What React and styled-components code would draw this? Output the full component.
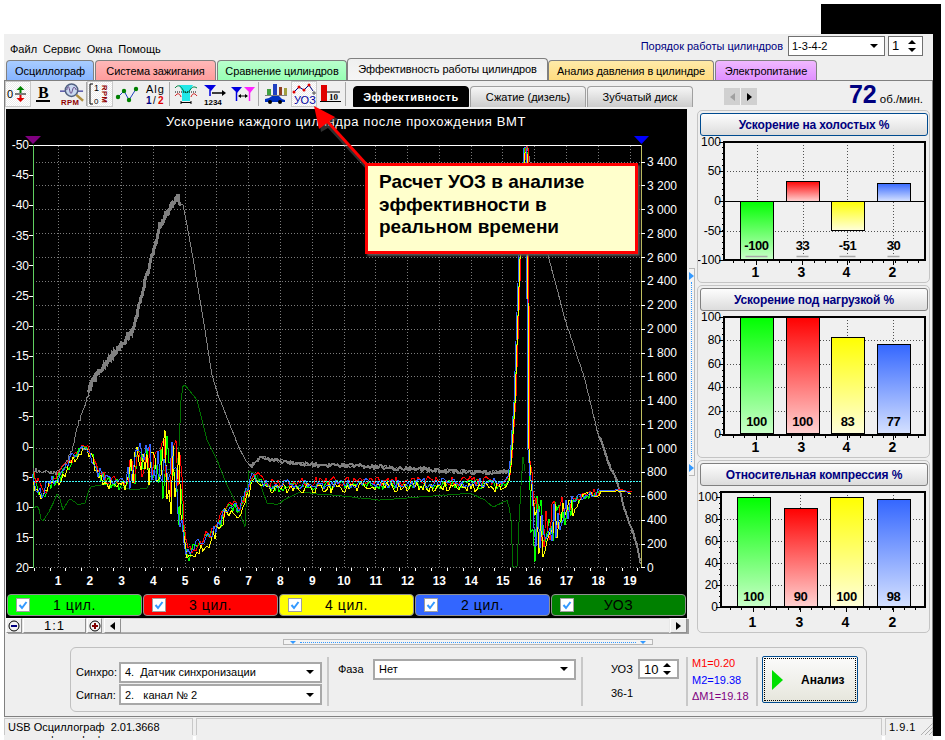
import React from 'react'
import styled, { createGlobalStyle } from 'styled-components'

const Global = createGlobalStyle`
  html, body { margin: 0; padding: 0; background: #ffffff; }
  body { font-family: "Liberation Sans", Arial, sans-serif; font-size: 11px; color: #000; }
  * { box-sizing: border-box; }
`

// trace helpers
const rng = (seed) => {
  let s = seed
  return () => {
    s = (s * 16807) % 2147483647
    return s / 2147483647
  }
}

const lerp = (keys, x) => {
  for (let i = 1; i < keys.length; i++) {
    if (x <= keys[i][0]) {
      const [x0, y0] = keys[i - 1]
      const [x1, y1] = keys[i]
      return y0 + ((y1 - y0) * (x - x0)) / Math.max(x1 - x0, 0.01)
    }
  }
  return keys[keys.length - 1][1]
}

const between = (keys, a, b) => [
  [a, lerp(keys, a)],
  ...keys.filter(([x]) => x > a && x < b),
  [b, lerp(keys, b)],
]

const makeTrace = (keys, ampAt, seed, step = 2, dy = 0) => {
  const r = rng(seed)
  const pts = []
  const end = keys[keys.length - 1][0]
  for (let x = keys[0][0]; x <= end; x += step) {
    const shift = x > 580 ? dy * 0.2 : dy
    const y = lerp(keys, x) + shift + (r() - 0.5) * 2 * ampAt(x)
    pts.push(`${x},${Math.min(568, Math.max(146, y)).toFixed(1)}`)
  }
  return pts.join(' ')
}

const cylKeys = [
  [33, 480], [43, 494], [50, 482], [58, 477], [70, 462], [78, 450], [85, 447], [92, 455], [98, 470], [105, 480],
  [115, 482], [125, 484], [130, 470], [140, 460], [150, 462], [165, 468], [178, 478], [183, 520], [187, 556],
  [195, 546], [205, 540], [215, 532], [225, 510], [240, 506], [248, 490], [252, 472], [260, 480], [270, 486],
  [300, 484], [400, 483], [505, 483], [510, 476], [515, 400], [520, 255], [524, 148], [527, 148], [528, 400],
  [530, 500], [535, 528], [550, 522], [565, 512], [580, 497], [600, 491], [620, 490], [632, 493],
]

const cylAmp = (x) => {
  if (x < 130) return 6
  if (x < 160) return 20
  if (x < 183) return 42
  if (x < 250) return 7
  if (x < 505) return 5
  if (x < 529) return 2
  if (x < 575) return 38 - (x - 529) * 0.65
  if (x < 600) return 4
  return 0.6
}

const greyKeys = [
  [33, 470], [50, 472], [58, 473], [65, 465], [72, 450], [78, 425], [85, 405], [92, 382], [100, 372], [110, 358],
  [120, 347], [130, 336], [135, 325], [140, 300], [150, 265], [160, 225], [170, 208], [176, 200], [178, 195],
  [180, 205], [183, 205], [187, 225], [195, 270], [205, 330], [212, 375], [218, 395], [230, 425], [240, 450],
  [247, 462], [250, 466], [258, 460], [265, 458], [280, 461], [300, 464], [400, 468], [470, 472], [510, 472],
  [515, 400], [520, 270], [525, 148], [527, 146], [548, 255], [560, 300], [565, 320], [572, 340], [585, 380],
  [597, 430], [603, 448], [612, 470], [617, 480], [622, 500], [630, 525], [637, 545], [641, 566],
]

const greyAmp = (x) => {
  if (x < 88) return 2
  if (x < 180) return 3.5
  if (x < 250) return 0.5
  if (x < 510) return 2.2
  if (x < 600) return 0.6
  return 2.5
}

const uozKeys = [
  [33, 509], [38, 505], [42, 523], [50, 510], [58, 492], [63, 510], [70, 498], [78, 505], [85, 503], [90, 487],
  [100, 485], [105, 484], [133, 490], [147, 488], [157, 470], [167, 470], [178, 470], [181, 400], [182, 388],
  [184, 384], [197, 400], [207, 440], [217, 460], [227, 485], [237, 505], [245, 527], [248, 470], [257, 475],
  [267, 503], [277, 505], [287, 498], [300, 492], [380, 500], [470, 493], [485, 500], [493, 507], [508, 500],
  [511, 520], [513, 567], [517, 567], [520, 500], [524, 442], [526, 500],
]

const leftLabels = [-50, -45, -40, -35, -30, -25, -20, -15, -10, -5, 0, 5, 10, 15, 20]
const rightLabels = ['3 400', '3 200', '3 000', '2 800', '2 600', '2 400', '2 200', '2 000', '1 800', '1 600', '1 400', '1 200', '1 000', '800', '600', '400', '200', '0']
const hours = Array.from({ length: 19 }, (_, i) => i + 1)
const xAt = (n) => 58 + 31.78 * (n - 1)

const Page = styled.div`
  position: relative;
  width: 945px;
  height: 740px;
  overflow: hidden;
  background: #ffffff;
`

const TopStrip = styled.div`
  height: 34px;
  padding: 4px 4px 0 0;
  display: flex;
  justify-content: flex-end;
`

const BlackBlock = styled.div`
  width: 120px;
  background: #000;
`

const WindowRow = styled.div`
  display: flex;
  padding-left: 4px;
`

const BlackEdge = styled.div`
  width: 8px;
  background: #000;
`

const Window = styled.div`
  width: 929px;
  height: 702px;
  background: #efefef;
  display: flex;
  flex-direction: column;
`

const MenuRow = styled.div`
  height: 26px;
  display: flex;
  justify-content: space-between;
  align-items: flex-start;
  padding: 2px 10px 0 6px;
`

const MenuList = styled.div`
  display: flex;
  gap: 6px;
  margin-top: 7px;
  line-height: 13px;
`

const OrderBox = styled.div`
  display: flex;
  align-items: center;
  height: 19px;
`

const OrderLabel = styled.span`
  color: #000080;
  margin-right: 5px;
`

const Field = styled.div`
  display: flex;
  align-items: center;
  justify-content: space-between;
  width: ${(p) => p.$w}px;
  height: ${(p) => p.$h || 20}px;
  margin-left: ${(p) => p.$ml || 0}px;
  background: #fff;
  border: ${(p) => (p.$dark ? '1px solid #707070' : '2px solid #a8a8a8')};
  padding: 0 6px 0 ${(p) => (p.$dark ? 3 : 4)}px;
  font-size: ${(p) => p.$fs || 11}px;
  white-space: pre;
`

const DownMark = styled.i`
  display: block;
  width: 0;
  height: 0;
  border-left: 4px solid transparent;
  border-right: 4px solid transparent;
  border-top: 4px solid #000;
`

const UpMark = styled(DownMark)`
  border-top: 0;
  border-bottom: 4px solid #000;
`

const SpinMarks = styled.span`
  display: flex;
  flex-direction: column;
  gap: 4px;
`

const TabRow = styled.div`
  height: 20px;
  display: flex;
  align-items: flex-end;
  padding-left: 2px;
`

const Tab = styled.div`
  width: ${(p) => p.$w}px;
  height: ${(p) => (p.$active ? 22 : 20)}px;
  margin-right: ${(p) => p.$gap || 0}px;
  background: linear-gradient(${(p) => p.$from}, ${(p) => p.$to});
  border: 1px solid #808080;
  border-bottom: 0;
  border-radius: 4px 4px 0 0;
  display: flex;
  align-items: center;
  justify-content: center;
  letter-spacing: -0.1px;
  white-space: nowrap;
  padding-bottom: ${(p) => (p.$active ? 2 : 0)}px;
`

const Body = styled.div`
  flex: none;
  height: 637px;
  border: 1px solid #808080;
  display: flex;
  flex-direction: column;
`

const ToolRow = styled.div`
  height: 26px;
  display: flex;
  align-items: flex-end;
`

const Tools = styled.div`
  display: flex;
  height: 26px;
  width: 348px;
  align-items: center;
`

const ToolBtn = styled.div`
  width: ${(p) => p.$w}px;
  height: 26px;
  margin-left: ${(p) => p.$ml || 0}px;
  display: flex;
  align-items: center;
  justify-content: center;
  background: ${(p) => (p.$on ? 'repeating-conic-gradient(#ffffff 0 25%, #ececec 0 50%) 0 0 / 2px 2px' : 'transparent')};
  border: 1px solid ${(p) => (p.$on ? '#c8c8c8' : 'transparent')};
`

const ToolSep = styled.div`
  width: 1px;
  height: 24px;
  margin-left: ${(p) => p.$ml || 0}px;
  background: #a8a8a8;
`

const SubTabs = styled.div`
  display: flex;
  gap: 1px;
  height: 21px;
`

const SubTab = styled.div`
  width: ${(p) => p.$w}px;
  border-radius: 4px 4px 0 0;
  display: flex;
  align-items: center;
  justify-content: center;
  white-space: nowrap;
  ${(p) =>
    p.$active
      ? 'background: #000; color: #fff; font-weight: bold; letter-spacing: 0.5px; border: 1px solid #000;'
      : 'background: linear-gradient(#f6f6f6, #cccccc); border: 1px solid #a0a0a0; border-bottom: 0;'}
`

const ArrowPair = styled.div`
  display: flex;
  width: 33px;
  height: 17px;
  margin: 0 0 2px 31px;
  background: #d0d0d0;
`

const ArrowBtn = styled.div`
  flex: 1;
  display: flex;
  align-items: center;
  justify-content: center;
  border-left: ${(p) => (p.$divided ? '1px solid #f4f4f4' : '0')};
`

const SideMark = styled.i`
  display: block;
  width: 0;
  height: 0;
  border-top: 4px solid transparent;
  border-bottom: 4px solid transparent;
  ${(p) => (p.$left ? `border-right: 5px solid ${p.$color};` : `border-left: 5px solid ${p.$color};`)}
`

const Rpm = styled.div`
  margin-left: auto;
  padding-right: 9px;
  display: flex;
  align-items: baseline;
  gap: 3px;
  height: 26px;
  line-height: 26px;
  font-size: 11.5px;
`

const RpmValue = styled.b`
  color: #000080;
  font-size: 25px;
`

const MainRow = styled.div`
  display: flex;
  padding: 2px 0 0 1px;
`

const ScopeColumn = styled.div`
  width: 681px;
`

const ScopeBlack = styled.div`
  background: #000;
  height: 509px;
`

const ScopeSvg = styled.svg`
  display: block;
  width: 681px;
  height: 485px;
`

const Legend = styled.div`
  display: flex;
  gap: 1px;
  padding-left: 1px;
`

const LegendBtn = styled.div`
  position: relative;
  width: 135px;
  height: 22px;
  background: ${(p) => p.$color};
  border: 1px solid #909090;
  border-radius: 4px;
  display: flex;
  align-items: center;
  justify-content: center;
  font-size: 14px;
  letter-spacing: 0.6px;
`

const Check = styled.svg`
  position: absolute;
  left: 8px;
  top: 3px;
`

const ScrollRow = styled.div`
  display: flex;
  height: 15px;
  background: #e8e8e8;
  box-shadow: 2px 1px 0 #a0a0a0;
`

const ScrollBtn = styled.div`
  width: ${(p) => p.$w}px;
  margin-left: ${(p) => p.$ml || 0}px;
  height: 15px;
  background: #efefef;
  border: 1px solid;
  border-color: #ffffff #909090 #909090 #ffffff;
  display: flex;
  align-items: center;
  justify-content: center;
  font-size: 13px;
  letter-spacing: 1px;
`

const ScrollTrack = styled.div`
  flex: 1;
  background: #efefef;
  border-top: 1px solid #d0d0d0;
  border-bottom: 1px solid #b0b0b0;
`

const VSplitWrap = styled.div`
  width: 10px;
  padding: 159px 0 0 2px;
`

const VSplit = styled.div`
  width: 6px;
  height: 208px;
  border: 1px solid #b8b8b8;
  border-left: 0;
  background: #f4f4f4;
  display: flex;
  flex-direction: column;
  align-items: center;
  justify-content: space-between;
  padding: 3px 0;
`

const VDots = styled.div`
  flex: 1;
  width: 0;
  margin: 2px 0;
  border-left: 1px dotted #3399ff;
`

const SidePanels = styled.div`
  width: 234px;
  margin-top: 1px;
  display: flex;
  flex-direction: column;
  gap: 2px;
`

const Panel = styled.div`
  height: 173px;
  width: 233px;
  border: 1px solid #c4c4c4;
  border-radius: 5px;
  padding: 2px 1px 0 2px;
`

const PanelHead = styled.div`
  height: 23px;
  width: 228px;
  background: linear-gradient(#fdfdfd, #dcdcdc);
  border: 1px solid ${(p) => p.$edge};
  border-radius: 3px;
  display: flex;
  align-items: center;
  justify-content: center;
  color: #000080;
  font-weight: bold;
  font-size: 12px;
  letter-spacing: -0.15px;
`

const BarSvg = styled.svg`
  display: block;
  width: 231px;
  height: 146px;
  margin-left: -2px;
`

const HSplitWrap = styled.div`
  height: 14px;
  padding: 6px 0 0 278px;
`

const HSplit = styled.div`
  width: 370px;
  height: 6px;
  background: #f4f4f4;
  border: 1px solid #b8b8b8;
  display: flex;
  align-items: center;
  padding: 0 6px;
  gap: 4px;
`

const HDots = styled.div`
  flex: 1;
  height: 0;
  border-top: 1px dotted #3399ff;
`

const TinyDown = styled.i`
  display: block;
  width: 0;
  height: 0;
  border-left: 3px solid transparent;
  border-right: 3px solid transparent;
  border-top: 3px solid #3399ff;
`

const ControlWrap = styled.div`
  padding-left: 65px;
`

const ControlPanel = styled.div`
  width: 797px;
  height: 65px;
  border: 1px solid #c0c0c0;
  border-radius: 6px;
  display: flex;
`

const Section = styled.div`
  width: ${(p) => p.$w}px;
  margin-top: 9px;
  height: 49px;
  border-right: ${(p) => (p.$last ? '0' : '2px solid #c8c8c8')};
  display: flex;
  flex-direction: ${(p) => (p.$row ? 'row' : 'column')};
  padding-left: ${(p) => p.$pl || 0}px;
`

const LabeledRow = styled.div`
  display: flex;
  align-items: center;
  height: 24px;
  margin-top: ${(p) => p.$mt || 0}px;
`

const RowLabel = styled.span`
  width: ${(p) => p.$w}px;
  flex: none;
`

const Readouts = styled.div`
  display: flex;
  flex-direction: column;
  margin-top: -2px;
  padding-left: 4px;
  line-height: 16.5px;
`

const Readout = styled.span`
  color: ${(p) => p.$color};
`

const AnalyzeWrap = styled.div`
  padding: 8px 0 0 4px;
`

const AnalyzeBtn = styled.div`
  width: 96px;
  height: 47px;
  border: 1px solid #004b8f;
  border-radius: 2px;
  background: linear-gradient(#fbfbfb, #e6e6dc);
  outline: 1px dotted #000;
  outline-offset: -3px;
  display: flex;
  align-items: center;
  padding-left: 9px;
  font-weight: bold;
  font-size: 12px;
  gap: 18px;
`

const StatusBar = styled.div`
  display: flex;
  height: 18px;
  padding-top: 1px;
  flex: none;
`

const StatusCell = styled.div`
  width: ${(p) => p.$w}px;
  margin-left: ${(p) => p.$ml || 0}px;
  border: 1px solid #c8c8c8;
  border-bottom: 0;
  padding: 0 3px;
  line-height: 16px;
  letter-spacing: ${(p) => p.$ls || 0}px;
  white-space: pre;
  overflow: hidden;
`

const Grip = styled.svg`
  position: absolute;
  left: 921px;
  top: 723px;
`

const Ghost = styled.div`
  position: absolute;
  left: 4px;
  top: 736px;
  width: 929px;
  height: 4px;
  overflow: hidden;
  display: flex;
`

const GhostCell = styled.div`
  width: ${(p) => p.$w}px;
  margin-left: ${(p) => p.$ml || 0}px;
  background: #efefef;
  white-space: pre;
  padding-left: 3px;
  line-height: 16px;
  margin-top: -12px;
  height: 16px;
`

const Callout = styled.div`
  position: absolute;
  left: 365px;
  top: 163px;
  width: 273px;
  height: 91px;
  background: #ffffcc;
  border: 3px solid #ff0000;
  box-shadow: 2px 2px 2px #555;
  padding: 5px 0 0 11px;
  font-size: 19px;
  line-height: 22.5px;
  font-weight: bold;
`

const ArrowLayer = styled.svg`
  position: absolute;
  left: 300px;
  top: 100px;
`

const Icon = ({ children, w = 24 }) => (
  <svg width={w} height={24} viewBox={`0 0 ${w} 24`}>
    {children}
  </svg>
)

const iconText = { fontFamily: '"Liberation Sans", Arial, sans-serif' }

const ZeroIcon = () => (
  <Icon>
    <text x="1" y="16" fontSize="11" style={iconText}>0</text>
    <path d="M9 12h11" stroke="#000" />
    <path d="M14.500 4l4 4h-3v3h-2v-3h-3z" fill="#008000" />
    <path d="M14.500 20l4-4h-3v-3h-2v3h-3z" fill="#e00000" />
  </Icon>
)

const BoldIcon = () => (
  <Icon>
    <text x="5" y="16" fontSize="16" fontWeight="bold" style={{ fontFamily: '"Liberation Serif", serif' }}>B</text>
    <path d="M3 19h14" stroke="#000" strokeWidth="2" />
  </Icon>
)

const RpmIcon = () => (
  <Icon w={26}>
    <path d="M0 9h24" stroke="#000080" />
    <circle cx="12" cy="8" r="6.500" fill="#c8d8f0" stroke="#506080" strokeWidth="1.500" />
    <path d="M7 8c1-5 2-5 3 0s2 4 3 0 2-4 4 0" fill="none" stroke="#604080" />
    <path d="M17 13l7 6" stroke="#b09040" strokeWidth="2.500" />
    <text x="1" y="23" fontSize="8" fontWeight="bold" fill="#900000" style={iconText} letterSpacing="0.5">RPM</text>
  </Icon>
)

const ScaleIcon = () => (
  <Icon>
    <path d="M5 2H2v20h3" fill="none" stroke="#000" />
    <text x="6" y="9" fontSize="9" style={iconText}>1</text>
    <text x="6" y="22" fontSize="8" style={iconText}>0</text>
    <text x="0" y="0" fontSize="7.500" fontWeight="bold" fill="#900000" style={iconText} transform="translate(14 3) rotate(90)" letterSpacing="0.5">RPM</text>
  </Icon>
)

const ZigIcon = () => (
  <Icon>
    <polyline points="3,15 9,9 14,18 21,7" fill="none" stroke="#2040c0" />
    <g fill="#008000">
      <circle cx="3" cy="15" r="2.200" />
      <circle cx="9" cy="9" r="2.200" />
      <circle cx="14" cy="18" r="2.200" />
      <circle cx="21" cy="7" r="2.200" />
    </g>
  </Icon>
)

const AlgIcon = () => (
  <Icon>
    <text x="3" y="11" fontSize="11" letterSpacing="1" style={iconText}>Alg</text>
    <text x="3" y="22" fontSize="10" fontWeight="bold" fill="#000080" style={iconText}>1</text>
    <text x="10" y="22" fontSize="10" style={iconText}>/</text>
    <text x="15" y="22" fontSize="10" fontWeight="bold" fill="#e00000" style={iconText}>2</text>
  </Icon>
)

const FaceIcon = () => (
  <Icon>
    <path d="M5 3h14l-3 6v10h-8v-10z" fill="#20e8e8" />
    <path d="M1 6c3-4 6-2 8 2s5 3 7 0 4-4 7-2" fill="none" stroke="#008040" />
    <path d="M1 14c3-4 5-2 6 1M17 15c1-3 3-5 6-1" fill="none" stroke="#d02020" />
    <path d="M1 10h22" stroke="#000" strokeDasharray="1 1" />
    <path d="M7 19v3M17 19v3M7 20.500h10" stroke="#000" />
  </Icon>
)

const FunnelArrowIcon = () => (
  <Icon>
    <path d="M1 3h12l-5 6z" fill="#0000e0" />
    <path d="M7 8v6" stroke="#0000e0" strokeWidth="1.500" />
    <path d="M9 11h11" stroke="#000" strokeWidth="1.500" />
    <path d="M19 8l4 3-4 3z" fill="#000" />
    <text x="1" y="23" fontSize="8" fontWeight="bold" style={iconText}>1234</text>
  </Icon>
)

const FunnelsIcon = () => (
  <Icon>
    <path d="M0 5h11l-5 6z" fill="#0000e0" />
    <path d="M5.500 10v9" stroke="#0000e0" strokeWidth="1.500" />
    <path d="M13 5h11l-5 6z" fill="#ff20ff" />
    <path d="M18.500 10v9" stroke="#ff20ff" strokeWidth="1.500" />
    <path d="M8 14h8" stroke="#000" />
    <path d="M10 12l-3 2 3 2zM14 12l3 2-3 2z" fill="#000" />
  </Icon>
)

const CarIcon = () => (
  <Icon>
    <rect x="3" y="7" width="4" height="6" fill="#40a040" />
    <rect x="9" y="2" width="4" height="11" fill="#2040c0" />
    <rect x="15" y="5" width="3" height="8" fill="#904020" />
    <rect x="20" y="6" width="3" height="7" fill="#a0a040" />
    <path d="M1 13.500h22" stroke="#808080" />
    <path d="M1 20v-3l4-1 3-2h7l3 3 3 1v2z" fill="#0030c0" />
    <circle cx="6" cy="20" r="2" fill="#000" />
    <circle cx="16" cy="20" r="2" fill="#000" />
  </Icon>
)

const UozIcon = () => (
  <Icon>
    <polyline points="2,10 7,5 12,8 17,3 21,9" fill="none" stroke="#000080" />
    <g fill="#e00000">
      <circle cx="2" cy="10" r="1.500" />
      <circle cx="7" cy="5" r="1.500" />
      <circle cx="12" cy="8" r="1.500" />
      <circle cx="17" cy="3" r="1.500" />
    </g>
    <circle cx="22" cy="11" r="1.200" fill="none" stroke="#000" strokeWidth="0.7" />
    <text x="2" y="22" fontSize="11" fill="#0000a0" style={iconText}>УОЗ</text>
  </Icon>
)

const BarTenIcon = () => (
  <Icon>
    <rect x="1" y="3" width="6" height="16" fill="#e00000" />
    <path d="M7 10h13M0 19.500h21" stroke="#000" />
    <text x="9" y="18" fontSize="9" fontWeight="bold" style={{ fontFamily: '"Liberation Serif", serif' }}>10</text>
  </Icon>
)

const Scope = () => {
  const traces = [
    { color: '#00ff00', seed: 1103, dy: 1.5, off: 0 },
    { color: '#ff0000', seed: 2377, dy: -2, off: 1 },
    { color: '#ffff00', seed: 3701, dy: 4, off: 0 },
    { color: '#3366ff', seed: 5119, dy: 0, off: -1 },
  ]
  const vTicks = []
  for (let n = 0.25; n < 19.5; n += 0.5) vTicks.push(xAt(n))

  return (
    <ScopeSvg viewBox="6 109 681 485">
      <text x="346" y="126" fill="#fff" fontSize="13" letterSpacing="0.6" textAnchor="middle">
        Ускорение каждого цилиндра после прохождения ВМТ
      </text>
      <g shapeRendering="crispEdges" fill="none">
        {rightLabels.map((_, i) => (
          <line key={i} x1="33" x2="641" y1={162 + i * 23.88} y2={162 + i * 23.88} stroke="#7c7c7c" strokeDasharray="1 2" />
        ))}
        {hours.map((n) => (
          <line key={n} x1={xAt(n)} x2={xAt(n)} y1="146" y2="568" stroke="#7c7c7c" strokeDasharray="1 2" />
        ))}
        <line x1="33" x2="641" y1="145.500" y2="145.500" stroke="#fff" />
        <line x1="33.500" x2="33.500" y1="145" y2="568" stroke="#60d060" />
        <line x1="641.500" x2="641.500" y1="145" y2="568" stroke="#c0c060" />
        {leftLabels.map((_, i) => (
          <line key={i} x1="29" x2="33" y1={145 + i * 30.2} y2={145 + i * 30.2} stroke="#fff" />
        ))}
        {rightLabels.map((_, i) => (
          <line key={i} x1="641" x2="645" y1={162 + i * 23.88} y2={162 + i * 23.88} stroke="#fff" />
        ))}
        {vTicks.map((x) => (
          <line key={x} x1={x} x2={x} y1="568" y2="571" stroke="#fff" />
        ))}
        <polyline points={makeTrace(greyKeys, greyAmp, 7001, 1)} stroke="#808080" />
        <polyline points={makeTrace(between(greyKeys, 88, 180), greyAmp, 7103, 1)} stroke="#808080" strokeWidth="3" />
        <polyline points={makeTrace(between(greyKeys, 250, 510), greyAmp, 7207, 2)} stroke="#808080" strokeWidth="2" />
        <polyline points={makeTrace(between(greyKeys, 600, 641), greyAmp, 7307, 2)} stroke="#808080" strokeWidth="2" />
        <polyline points={makeTrace(uozKeys, () => 0.3, 3001, 2)} stroke="#007000" />
        {traces.map((t) => (
          <polyline
            key={t.color}
            points={makeTrace(cylKeys.map(([x, y]) => [x + t.off, y]), cylAmp, t.seed, 2, t.dy)}
            stroke={t.color}
          />
        ))}
        <line x1="33" x2="641" y1="481.500" y2="481.500" stroke="#40ffff" strokeDasharray="2 1" />
      </g>
      <path d="M25 136h16l-8 8z" fill="#800080" />
      <path d="M634 136h15l-7.500 8z" fill="#0000ff" />
      <g fill="#fff" fontSize="12">
        {leftLabels.map((v, i) => (
          <text key={v} x="29" y={149 + i * 30.2} textAnchor="end">{v}</text>
        ))}
        {rightLabels.map((v, i) => (
          <text key={v} x="647" y={166 + i * 23.88}>{v}</text>
        ))}
      </g>
      <g fill="#fff" fontSize="12" fontWeight="bold" textAnchor="middle">
        {hours.map((n) => (
          <text key={n} x={xAt(n)} y="585">{n}</text>
        ))}
      </g>
    </ScopeSvg>
  )
}

const barFill = { 1: 'gGreen', 3: 'gRed', 4: 'gYellow', 2: 'gBlue' }

const BarChart = ({ chart }) => {
  const { top, left, right, y0, y1, labels, grid, minor, bars, zero, valueY, catY, underline, vLines } = chart
  const ticks = []
  for (let y = y0; y <= y1 + 0.5; y += minor) ticks.push(y)
  const bottomTicks = []
  for (let x = left + 9; x < right; x += 11.6) bottomTicks.push(x)
  return (
    <BarSvg viewBox={`698 ${top} 231 146`}>
      <g shapeRendering="crispEdges">
        <rect x={left} y={y0} width={right - left} height={y1 - y0} fill="#f0f0f0" />
        {grid.map((y) => (
          <line key={y} x1={left} x2={right} y1={y} y2={y} stroke="#505050" strokeDasharray="1 2" />
        ))}
        {vLines.map((x) => (
          <line key={x} x1={x} x2={x} y1={y0} y2={y1} stroke="#505050" strokeDasharray="1 2" />
        ))}
        {bars.map((b) => (
          <rect key={b.x} x={b.x} y={b.top} width="33" height={b.bottom - b.top} fill={`url(#${barFill[b.cat]})`} stroke="#000" />
        ))}
        {zero && <line x1={left} x2={right} y1={zero} y2={zero} stroke="#000" />}
        <rect x={left} y={y0} width={right - left} height={y1 - y0} fill="none" stroke="#000" strokeWidth="2" />
        {ticks.map((y) => (
          <line key={y} x1={left - 2} x2={left} y1={y} y2={y} stroke="#000" />
        ))}
        {labels.map(([, y]) => (
          <line key={y} x1={left - 5} x2={left} y1={y} y2={y} stroke="#000" />
        ))}
        {bottomTicks.map((x) => (
          <line key={x} x1={x} x2={x} y1={y1} y2={y1 + 3} stroke="#000" />
        ))}
        {bars.map((b) => (
          <line key={b.x} x1={b.x + 16} x2={b.x + 16} y1={y1} y2={y1 + 5} stroke="#000" />
        ))}
      </g>
      <g fontSize="12" textAnchor="end" fill="#000">
        {labels.map(([t, y]) => (
          <text key={t} x={left - 3} y={y + 4}>{t}</text>
        ))}
      </g>
      <g textAnchor="middle" fill="#000">
        {bars.map((b) => (
          <text key={b.x} x={b.x + 16.500} y={valueY} fontSize="13" fontWeight="bold" letterSpacing="-0.4">{b.value}</text>
        ))}
        {underline && bars.map((b) => (
          <line key={b.x} x1={b.x + 16.500 - b.uw} x2={b.x + 16.500 + b.uw} y1={valueY + 6.500} y2={valueY + 6.500} stroke="#a8a8a8" strokeWidth="1.500" />
        ))}
        {bars.map((b) => (
          <text key={b.x} x={b.x + 15.500} y={catY} fontSize="14" fontWeight="bold">{b.cat}</text>
        ))}
      </g>
    </BarSvg>
  )
}

const idleChart = {
  top: 136, left: 724, right: 925, y0: 142, y1: 260, minor: 5.9, zero: 201, valueY: 250, catY: 277, underline: true,
  labels: [['100', 142], ['50', 171], ['0', 201], ['-50', 231], ['-100', 260]],
  grid: [171, 231],
  vLines: [757, 803, 847, 893],
  bars: [
    { x: 740, top: 201, bottom: 259, cat: 1, value: -100, uw: 11 },
    { x: 786, top: 181, bottom: 201, cat: 3, value: 33, uw: 6 },
    { x: 831, top: 201, bottom: 230, cat: 4, value: -51, uw: 8 },
    { x: 877, top: 183, bottom: 201, cat: 2, value: 30, uw: 6 },
  ],
}

const loadChart = {
  top: 311, left: 724, right: 925, y0: 317, y1: 435, minor: 5.9, valueY: 426, catY: 452,
  labels: [['100', 317], ['80', 340], ['60', 364], ['40', 387], ['20', 411], ['0', 434]],
  grid: [340, 364, 387, 411],
  vLines: [757, 803, 847, 893],
  bars: [
    { x: 740, top: 317, bottom: 433, cat: 1, value: 100 },
    { x: 786, top: 317, bottom: 433, cat: 3, value: 100 },
    { x: 831, top: 337, bottom: 433, cat: 4, value: 83 },
    { x: 877, top: 344, bottom: 433, cat: 2, value: 77 },
  ],
}

const compChart = {
  top: 486, left: 721, right: 925, y0: 492, y1: 607, minor: 5.5, valueY: 601, catY: 627,
  labels: [['100', 497], ['80', 519], ['60', 541], ['40', 563], ['20', 585], ['0', 607]],
  grid: [519, 541, 563, 585],
  vLines: [753, 800, 847, 893],
  bars: [
    { x: 737, top: 497, bottom: 606, cat: 1, value: 100 },
    { x: 784, top: 508, bottom: 606, cat: 3, value: 90 },
    { x: 830, top: 497, bottom: 606, cat: 4, value: 100 },
    { x: 877, top: 499, bottom: 606, cat: 2, value: 98 },
  ],
}

const panels = [
  { title: 'Ускорение на холостых %', edge: '#004b8f', chart: idleChart },
  { title: 'Ускорение под нагрузкой %', edge: '#808080', chart: loadChart },
  { title: 'Относительная компрессия %', edge: '#808080', chart: compChart },
]

const legend = [
  { label: '1 цил.', color: '#00ff00' },
  { label: '3 цил.', color: '#ff0000' },
  { label: '4 цил.', color: '#ffff00' },
  { label: '2 цил.', color: '#3366ff' },
  { label: 'УОЗ', color: '#008000' },
]

const tabs = [
  { label: 'Осциллограф', w: 88, gap: 1, from: '#a8ccff', to: '#86b4ff' },
  { label: 'Система зажигания', w: 121, gap: 1, from: '#ffb8b8', to: '#ff9c9c' },
  { label: 'Сравнение цилиндров', w: 130, from: '#b8ffcc', to: '#98ffb4' },
  { label: 'Эффективность работы цилиндров', w: 201, active: true, from: '#efefef', to: '#f6f6f6' },
  { label: 'Анализ давления в цилиндре', w: 166, gap: 1, from: '#ffeaa8', to: '#ffdc80' },
  { label: 'Электропитание', w: 102, from: '#f0b8ff', to: '#e090ff' },
]

export default function App() {
  return (
    <Page>
      <Global />
      <svg width="0" height="0" style={{ position: 'absolute' }}>
        <defs>
          <linearGradient id="gGreen" x1="0" y1="0" x2="0" y2="1">
            <stop offset="0" stopColor="#00ff00" />
            <stop offset="1" stopColor="#c8ffc8" />
          </linearGradient>
          <linearGradient id="gRed" x1="0" y1="0" x2="0" y2="1">
            <stop offset="0" stopColor="#ff0000" />
            <stop offset="1" stopColor="#ffd0d0" />
          </linearGradient>
          <linearGradient id="gYellow" x1="0" y1="0" x2="0" y2="1">
            <stop offset="0" stopColor="#ffff00" />
            <stop offset="1" stopColor="#ffffd8" />
          </linearGradient>
          <linearGradient id="gBlue" x1="0" y1="0" x2="0" y2="1">
            <stop offset="0" stopColor="#3366ff" />
            <stop offset="1" stopColor="#d4e0ff" />
          </linearGradient>
        </defs>
      </svg>

      <TopStrip>
        <BlackBlock />
      </TopStrip>

      <WindowRow>
        <Window>
          <MenuRow>
            <MenuList>
              <span>Файл</span>
              <span>Сервис</span>
              <span>Окна</span>
              <span>Помощь</span>
            </MenuList>
            <OrderBox>
              <OrderLabel>Порядок работы цилиндров</OrderLabel>
              <Field $w={97} $dark>
                1-3-4-2
                <DownMark />
              </Field>
              <Field $w={35} $ml={3} $dark $fs={13}>
                1
                <SpinMarks>
                  <UpMark />
                  <DownMark />
                </SpinMarks>
              </Field>
            </OrderBox>
          </MenuRow>

          <TabRow>
            {tabs.map((t) => (
              <Tab key={t.label} $w={t.w} $gap={t.gap} $from={t.from} $to={t.to} $active={t.active}>
                {t.label}
              </Tab>
            ))}
          </TabRow>

          <Body>
            <ToolRow>
              <Tools>
                <ToolBtn $w={26} $on><ZeroIcon /></ToolBtn>
                <ToolBtn $w={28}><BoldIcon /></ToolBtn>
                <ToolBtn $w={27}><RpmIcon /></ToolBtn>
                <ToolSep />
                <ToolBtn $w={26} $on><ScaleIcon /></ToolBtn>
                <ToolBtn $w={28}><ZigIcon /></ToolBtn>
                <ToolBtn $w={28}><AlgIcon /></ToolBtn>
                <ToolSep />
                <ToolBtn $w={26} $ml={3}><FaceIcon /></ToolBtn>
                <ToolBtn $w={28} $ml={2}><FunnelArrowIcon /></ToolBtn>
                <ToolBtn $w={28}><FunnelsIcon /></ToolBtn>
                <ToolSep $ml={1} />
                <ToolBtn $w={27} $ml={3}><CarIcon /></ToolBtn>
                <ToolBtn $w={26} $on $ml={2}><UozIcon /></ToolBtn>
                <ToolBtn $w={26} $ml={2}><BarTenIcon /></ToolBtn>
                <ToolSep />
              </Tools>
              <SubTabs>
                <SubTab $w={116} $active>Эффективность</SubTab>
                <SubTab $w={116}>Сжатие (дизель)</SubTab>
                <SubTab $w={106}>Зубчатый диск</SubTab>
              </SubTabs>
              <ArrowPair>
                <ArrowBtn><SideMark $left $color="#a0a0a0" /></ArrowBtn>
                <ArrowBtn $divided><SideMark $color="#000" /></ArrowBtn>
              </ArrowPair>
              <Rpm>
                <RpmValue>72</RpmValue>
                об./мин.
              </Rpm>
            </ToolRow>

            <MainRow>
              <ScopeColumn>
                <ScopeBlack>
                  <Scope />
                  <Legend>
                    {legend.map((l) => (
                      <LegendBtn key={l.label} $color={l.color}>
                        <Check width="14" height="14" viewBox="0 0 14 14">
                          <rect x="0.500" y="0.500" width="13" height="13" fill="#fff" stroke="#a0a0a0" />
                          <path d="M3.500 7l2.500 3 4.500-6" fill="none" stroke="#3399ff" strokeWidth="2" />
                        </Check>
                        {l.label}
                      </LegendBtn>
                    ))}
                  </Legend>
                </ScopeBlack>
                <ScrollRow>
                  <ScrollBtn $w={16}>
                    <svg width="12" height="12" viewBox="0 0 12 12">
                      <circle cx="6" cy="6" r="5" fill="#f4f4f4" stroke="#000" />
                      <path d="M3 6h6" stroke="#000080" strokeWidth="2" />
                    </svg>
                  </ScrollBtn>
                  <ScrollBtn $w={63} $ml={1}>1:1</ScrollBtn>
                  <ScrollBtn $w={15} $ml={1}>
                    <svg width="12" height="12" viewBox="0 0 12 12">
                      <circle cx="6" cy="6" r="5" fill="#f4f4f4" stroke="#000" />
                      <path d="M3 6h6M6 3v6" stroke="#800000" strokeWidth="2" />
                    </svg>
                  </ScrollBtn>
                  <ScrollBtn $w={17} $ml={2}><SideMark $left $color="#000" /></ScrollBtn>
                  <ScrollTrack />
                  <ScrollBtn $w={17} $ml={1}><SideMark $color="#000" /></ScrollBtn>
                </ScrollRow>
              </ScopeColumn>

              <VSplitWrap>
                <VSplit>
                  <SideMark $color="#3399ff" />
                  <VDots />
                  <SideMark $color="#3399ff" />
                </VSplit>
              </VSplitWrap>

              <SidePanels>
                {panels.map((p) => (
                  <Panel key={p.title}>
                    <PanelHead $edge={p.edge}>{p.title}</PanelHead>
                    <BarChart chart={p.chart} />
                  </Panel>
                ))}
              </SidePanels>
            </MainRow>

            <HSplitWrap>
              <HSplit>
                <TinyDown />
                <HDots />
                <TinyDown />
              </HSplit>
            </HSplitWrap>

            <ControlWrap>
              <ControlPanel>
                <Section $w={258} $pl={5}>
                  <LabeledRow $mt={4}>
                    <RowLabel $w={43}>Синхро:</RowLabel>
                    <Field $w={203} $h={21}>
                      4.  Датчик синхронизации
                      <DownMark />
                    </Field>
                  </LabeledRow>
                  <LabeledRow>
                    <RowLabel $w={43}>Сигнал:</RowLabel>
                    <Field $w={203} $h={21}>
                      2.   канал № 2
                      <DownMark />
                    </Field>
                  </LabeledRow>
                </Section>
                <Section $w={254} $pl={9}>
                  <LabeledRow>
                    <RowLabel $w={35}>Фаза</RowLabel>
                    <Field $w={203} $h={21}>
                      Нет
                      <DownMark />
                    </Field>
                  </LabeledRow>
                </Section>
                <Section $w={105} $pl={28}>
                  <LabeledRow>
                    <RowLabel $w={27}>УОЗ</RowLabel>
                    <Field $w={41} $h={20} $fs={13}>
                      10
                      <SpinMarks>
                        <UpMark />
                        <DownMark />
                      </SpinMarks>
                    </Field>
                  </LabeledRow>
                  <LabeledRow>36-1</LabeledRow>
                </Section>
                <Section $w={70}>
                  <Readouts>
                    <Readout $color="#ff0000">M1=0.20</Readout>
                    <Readout $color="#0000ff">M2=19.38</Readout>
                    <Readout $color="#800080">ΔM1=19.18</Readout>
                  </Readouts>
                </Section>
                <AnalyzeWrap>
                  <AnalyzeBtn>
                    <svg width="11" height="20" viewBox="0 0 11 20">
                      <path d="M0 0l11 10-11 10z" fill="#00e000" />
                    </svg>
                    Анализ
                  </AnalyzeBtn>
                </AnalyzeWrap>
              </ControlPanel>
            </ControlWrap>
          </Body>

          <StatusBar>
            <StatusCell $w={189}>USB Осциллограф  2.01.3668</StatusCell>
            <StatusCell $w={686} $ml={3} />
            <StatusCell $w={48} $ml={3} $ls={0.5}>1.9.1</StatusCell>
          </StatusBar>
        </Window>
        <BlackEdge />
      </WindowRow>

      <Ghost>
        <GhostCell $w={189}>USB Осциллограф  2.01.3668</GhostCell>
        <GhostCell $w={686} $ml={3} />
        <GhostCell $w={48} $ml={3}>1.9.1</GhostCell>
      </Ghost>

      <Grip width="12" height="12" viewBox="0 0 12 12">
        <path d="M0 12L12 0M4 12l8-8M8 12l4-4" stroke="#b0b0b0" />
      </Grip>

      <ArrowLayer width="80" height="75" viewBox="300 100 80 75">
        <path d="M369 168L329 125L338 119L317 109L321 132L328 128L367 170z" fill="#606060" opacity="0.5" />
        <path d="M367 165L327 121" stroke="#ff0000" strokeWidth="3" />
        <path d="M314 106L335 117L319 129z" fill="#ff0000" />
      </ArrowLayer>

      <Callout>
        Расчет УОЗ в анализе
        <br />
        эффективности в
        <br />
        реальном времени
      </Callout>
    </Page>
  )
}
